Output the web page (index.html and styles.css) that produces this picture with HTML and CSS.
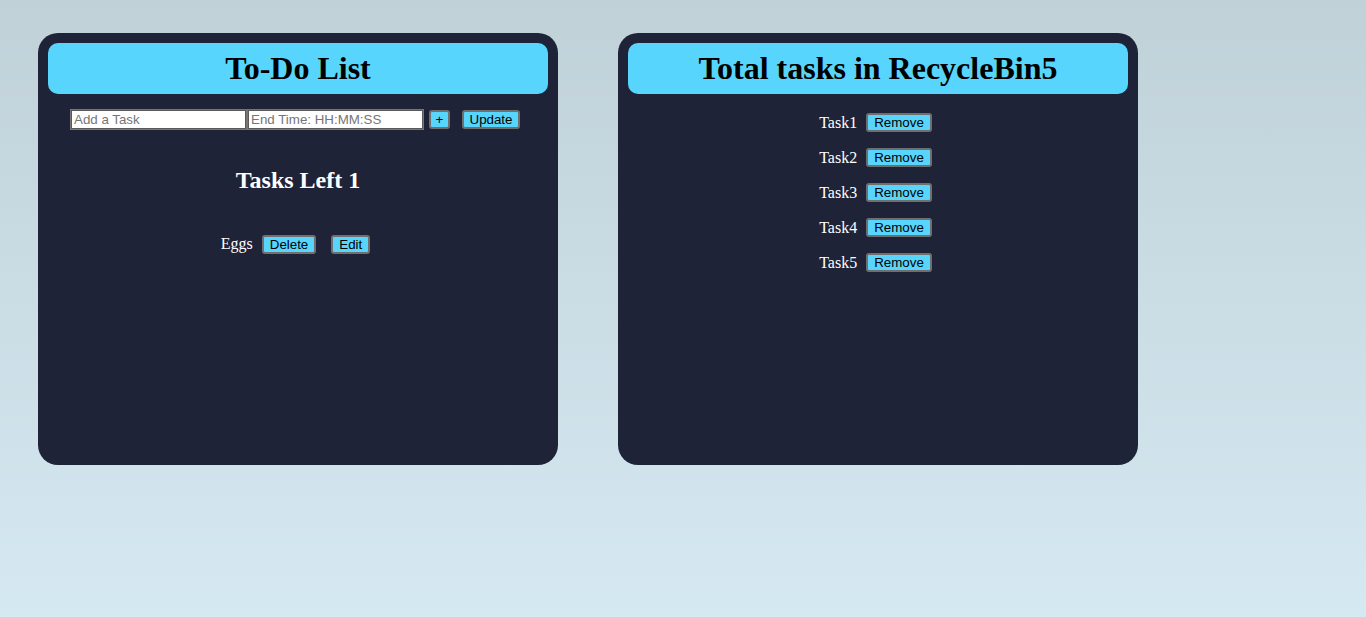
FILE: index.html
```html
<!DOCTYPE html>
<html>
<head>
<meta charset="utf-8">
<link rel="stylesheet" href="styles.css">
</head>
<body>
<div class="page">
  <section class="card">
    <h1 class="card-title">To-Do List</h1>
    <div class="add-row">
      <input class="field" type="text" placeholder="Add a Task"><input class="field" type="text" placeholder="End Time: HH:MM:SS">
      <button class="btn btn-plus">+</button>
      <button class="btn btn-update">Update</button>
    </div>
    <h2 class="tasks-left">Tasks Left 1</h2>
    <div class="task-row">
      <span class="task-name">Eggs</span>
      <button class="btn">Delete</button>
      <button class="btn btn-edit">Edit</button>
    </div>
  </section>
  <section class="card">
    <h1 class="card-title">Total tasks in RecycleBin5</h1>
    <ul class="bin-list">
      <li class="bin-row"><span class="task-name">Task1</span><button class="btn">Remove</button></li>
      <li class="bin-row"><span class="task-name">Task2</span><button class="btn">Remove</button></li>
      <li class="bin-row"><span class="task-name">Task3</span><button class="btn">Remove</button></li>
      <li class="bin-row"><span class="task-name">Task4</span><button class="btn">Remove</button></li>
      <li class="bin-row"><span class="task-name">Task5</span><button class="btn">Remove</button></li>
    </ul>
  </section>
</div>
</body>
</html>
```

FILE: styles.css
```css
html, body {
  margin: 0;
  padding: 0;
  height: 100%;
}
body {
  background: linear-gradient(to bottom, #c0d1d8 0%, #d5e9f2 100%);
  font-family: "Liberation Serif", "Times New Roman", serif;
  font-size: 16px;
}
.page {
  display: flex;
  gap: 60px;
  padding: 33px 0 0 38px;
}
.card {
  width: 500px;
  height: 412px;
  padding: 10px;
  background: #1f2338;
  border-radius: 20px;
  display: flex;
  flex-direction: column;
  align-items: center;
}
.card-title {
  align-self: stretch;
  margin: 0;
  height: 51px;
  line-height: 51px;
  background: #58d5fc;
  border-radius: 10px;
  text-align: center;
  font-size: 32px;
  font-weight: bold;
  color: #000;
}
.add-row {
  display: flex;
  align-items: center;
  margin-top: 15px;
  margin-left: -6px;
  height: 21px;
}
.field {
  box-sizing: border-box;
  width: 177px;
  height: 21px;
  margin: 0;
  padding: 1px 3px;
  border: 1px solid #767676;
  outline: 1px solid #5a5a5a;
  outline-offset: -2px;
  font-family: "Liberation Sans", Arial, sans-serif;
  font-size: 13.333px;
  background: #fff;
}
.field::placeholder {
  color: #757575;
}
.btn {
  box-sizing: border-box;
  height: 19px;
  padding: 0 6px;
  margin: 0;
  background: #58d5fc;
  border: 2px solid #6f6f6f;
  border-radius: 3px;
  font-family: "Liberation Sans", Arial, sans-serif;
  font-size: 13.333px;
  line-height: 15px;
  color: #000;
}
.btn-plus {
  margin-left: 5px;
  width: 21px;
  padding: 0;
}
.btn-update {
  margin-left: 12px;
  width: 58px;
  padding: 0;
}
.tasks-left {
  margin: 36px 0 0;
  height: 28px;
  line-height: 28px;
  font-size: 24px;
  font-weight: bold;
  color: #fff;
}
.task-row {
  display: flex;
  align-items: center;
  margin-top: 40px;
  padding-right: 5px;
  height: 20px;
  color: #fff;
}
.task-name {
  color: #fff;
  font-size: 16px;
  margin-right: 9px;
}
.btn-edit {
  margin-left: 15px;
}
.bin-list {
  list-style: none;
  margin: 19px 0 0;
  padding: 0 5px 0 0;
  display: flex;
  flex-direction: column;
  gap: 16px;
}
.bin-row {
  display: flex;
  align-items: center;
  height: 19px;
}
```
